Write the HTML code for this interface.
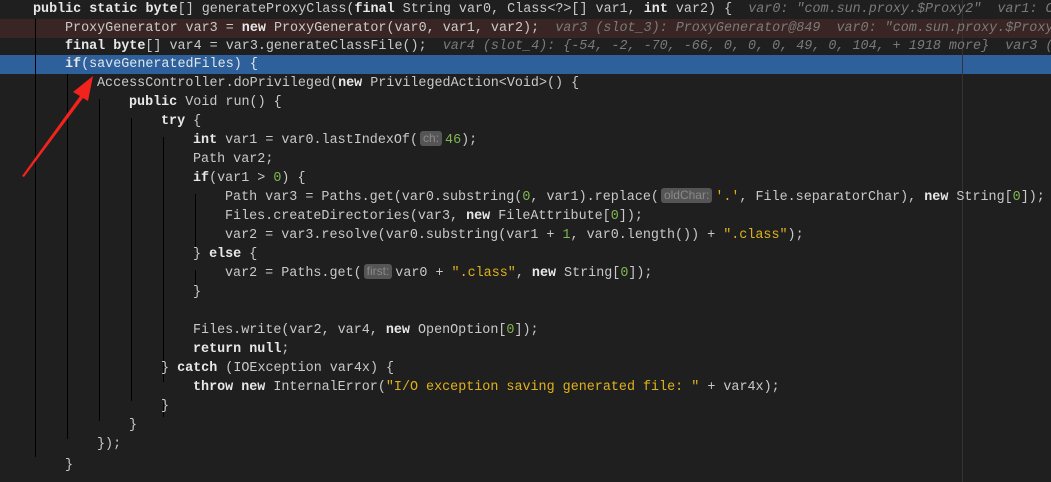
<!DOCTYPE html>
<html><head><style>
body{margin:0;background:#1f1f1f;width:1051px;height:482px;overflow:hidden;position:relative;font-family:"Liberation Mono",monospace;font-size:13.4px;color:#c9c9c9}
.l{position:absolute;left:0;width:1051px;height:19px;line-height:19px;white-space:pre}
.k{color:#e8e8e8;font-weight:bold}
.n{color:#7fb850}
.s{color:#e0b219}
.h{color:#7a7a7a;font-style:italic}
.b{display:inline-block;background:#555;color:#8a8a8a;font-family:"Liberation Sans",sans-serif;font-size:12px;line-height:15px;border-radius:3px;padding:0 3px;margin:0 3px 0 2px;vertical-align:1px}
.g{position:absolute;width:1px;background:#000}
</style></head><body>
<div class="l" style="top:0;background:#1f1f1f"></div>
<div class="l" style="top:19px;background:#3a2525"></div>
<div class="l" style="top:55px;height:19px;background:#2e609b"></div>
<div class="g" style="left:35px;top:19px;height:438px"></div>
<div class="g" style="left:67px;top:74px;height:365px"></div>
<div class="g" style="left:99px;top:99px;height:322px"></div>
<div class="g" style="left:131px;top:118px;height:283px"></div>
<div class="g" style="left:163px;top:137px;height:245px"></div>
<div class="g" style="left:195px;top:194px;height:55px"></div>
<div class="g" style="left:195px;top:270px;height:15px"></div>
<div class="g" style="left:163px;top:402px;height:15px;background:#000"></div>
<div class="g" style="left:962px;top:0;height:482px;background:#333"></div>
<div class="l" style="top:0;padding-left:33px"><span class="k">public static byte</span>[] generateProxyClass(<span class="k">final</span> String var0, Class&lt;?&gt;[] var1, <span class="k">int</span> var2) {  <span class="h">var0: "com.sun.proxy.$Proxy2"  var1: Cl</span></div>
<div class="l" style="top:19px;padding-left:65px">ProxyGenerator var3 = <span class="k">new</span> ProxyGenerator(var0, var1, var2);  <span class="h">var3 (slot_3): ProxyGenerator@849  var0: "com.sun.proxy.$Proxy2</span></div>
<div class="l" style="top:37px;padding-left:65px"><span class="k">final byte</span>[] var4 = var3.generateClassFile();  <span class="h">var4 (slot_4): {-54, -2, -70, -66, 0, 0, 0, 49, 0, 104, + 1918 more}  var3 (s</span></div>
<div class="l" style="top:55px;padding-left:65px;color:#e0e6ee"><span class="k">if</span>(saveGeneratedFiles) {</div>
<div class="l" style="top:74px;padding-left:97px">AccessController.doPrivileged(<span class="k">new</span> PrivilegedAction&lt;Void&gt;() {</div>
<div class="l" style="top:93px;padding-left:129px"><span class="k">public</span> Void run() {</div>
<div class="l" style="top:112px;padding-left:161px"><span class="k">try</span> {</div>
<div class="l" style="top:131px;padding-left:193px"><span class="k">int</span> var1 = var0.lastIndexOf(<span class="b">ch:</span><span class="n">46</span>);</div>
<div class="l" style="top:150px;padding-left:193px">Path var2;</div>
<div class="l" style="top:169px;padding-left:193px"><span class="k">if</span>(var1 &gt; <span class="n">0</span>) {</div>
<div class="l" style="top:188px;padding-left:225px">Path var3 = Paths.get(var0.substring(<span class="n">0</span>, var1).replace(<span class="b">oldChar:</span><span class="s">'.'</span>, File.separatorChar), <span class="k">new</span> String[<span class="n">0</span>]);</div>
<div class="l" style="top:207px;padding-left:225px">Files.createDirectories(var3, <span class="k">new</span> FileAttribute[<span class="n">0</span>]);</div>
<div class="l" style="top:226px;padding-left:225px">var2 = var3.resolve(var0.substring(var1 + <span class="n">1</span>, var0.length()) + <span class="s">".class"</span>);</div>
<div class="l" style="top:245px;padding-left:193px">} <span class="k">else</span> {</div>
<div class="l" style="top:264px;padding-left:225px">var2 = Paths.get(<span class="b">first:</span>var0 + <span class="s">".class"</span>, <span class="k">new</span> String[<span class="n">0</span>]);</div>
<div class="l" style="top:283px;padding-left:193px">}</div>
<div class="l" style="top:321px;padding-left:193px">Files.write(var2, var4, <span class="k">new</span> OpenOption[<span class="n">0</span>]);</div>
<div class="l" style="top:340px;padding-left:193px"><span class="k">return null</span>;</div>
<div class="l" style="top:359px;padding-left:161px">} <span class="k">catch</span> (IOException var4x) {</div>
<div class="l" style="top:378px;padding-left:193px"><span class="k">throw new</span> InternalError(<span class="s">"I/O exception saving generated file: "</span> + var4x);</div>
<div class="l" style="top:397px;padding-left:161px">}</div>
<div class="l" style="top:416px;padding-left:129px">}</div>
<div class="l" style="top:435px;padding-left:97px">});</div>
<div class="l" style="top:456px;padding-left:65px">}</div>
<svg style="position:absolute;left:0;top:0" width="1051" height="482"><polygon points="22,176 80,96 73,92 93,76 88,101 83,98 24,177" fill="#f2231c"/></svg>
</body></html>
